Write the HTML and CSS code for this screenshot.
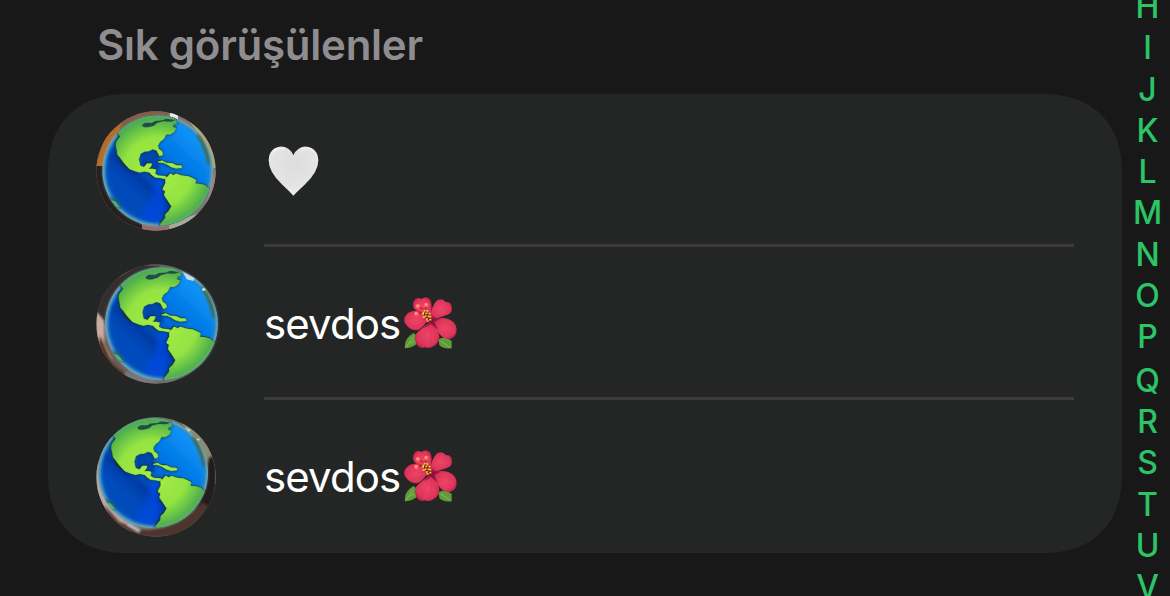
FILE: index.html
```html
<!DOCTYPE html>
<html lang="tr">
  <head>
    <meta charset="UTF-8" />
    <meta name="viewport" content="width=device-width, initial-scale=1.0" />
    <title>Sık görüşülenler</title>
    <link rel="stylesheet" href="styles.css">
  </head>
  <body>
    <!-- Shared shapes -->
    <svg class="defs" width="0" height="0">
      <defs>
        <radialGradient id="ocean" gradientUnits="userSpaceOnUse" cx="215" cy="212" r="166">
          <stop offset="0" stop-color="#0068d8" />
          <stop offset="0.85" stop-color="#0074e0" />
          <stop offset="0.95" stop-color="#2a8ccb" />
          <stop offset="1" stop-color="#6f9fae" />
        </radialGradient>
        <linearGradient id="depth" gradientUnits="userSpaceOnUse" x1="310" y1="110" x2="150" y2="290">
          <stop offset="0" stop-color="#0b94f8" stop-opacity="0.9" />
          <stop offset="0.45" stop-color="#0576e4" stop-opacity="0.5" />
          <stop offset="0.8" stop-color="#0435a0" stop-opacity="0.9" />
          <stop offset="1" stop-color="#043fb0" stop-opacity="0.75" />
        </linearGradient>
        <radialGradient id="land" gradientUnits="userSpaceOnUse" cx="215" cy="215" r="178">
          <stop offset="0" stop-color="#a6ee45" />
          <stop offset="0.58" stop-color="#93e342" />
          <stop offset="0.85" stop-color="#55b54a" />
          <stop offset="1" stop-color="#3f9a62" />
        </radialGradient>
        <filter id="soft" x="-20%" y="-20%" width="140%" height="140%">
          <feGaussianBlur stdDeviation="3" />
        </filter>
        <filter id="softer" x="-20%" y="-20%" width="140%" height="140%">
          <feGaussianBlur stdDeviation="8" />
        </filter>
        <clipPath id="sphere"><circle cx="215" cy="212" r="166" /></clipPath>
        <g id="continents">
          <path d="M92 92L112 76Q150 48 205 46Q245 42 270 60L273 71L262 73L260 82L270 84L265 95L253 103L240 103L233 117L221 126L215 137L218 147L228 154L230 164L221 168L212 151L200 147L188 153L176 154L163 161L158 178L162 197L174 202L183 191L197 191L194 200L187 207L200 207L209 209L207 221L217 227L239 229L236 236L222 233L208 232L198 225L190 217L176 214L161 217L145 212L130 206L119 194L110 184L103 174L95 164L93 151L90 138L91 125L103 109Z" />
          <path d="M216 186L228 182L241 189L258 190L270 196L286 197L288 203L270 205L256 201L243 193L232 188Z" />
          <path d="M238 233L246 230L252 221L263 226L270 221L288 227L306 229L320 235L330 240L327 251L342 252L358 256L372 268Q366 306 330 345Q285 388 222 382L224 371L238 354L239 342L249 333L257 319L246 302L235 286L238 274L230 268L239 249Z" />
        </g>
        <g id="globe">
          <circle cx="215" cy="212" r="166" fill="url(#ocean)" />
          <g clip-path="url(#sphere)">
            <circle cx="215" cy="212" r="155" fill="url(#depth)" filter="url(#soft)" />
            <path d="M240 232Q245 310 220 372L160 355Q205 300 205 240Z" fill="#0048e8" opacity="0.65" filter="url(#softer)" />
            <path d="M165 158L215 145L222 210L165 200Z" fill="#033a9c" opacity="0.75" filter="url(#soft)" />
            <path d="M338 96Q362 130 372 185L366 200Q360 155 332 108Z" fill="#3f6b4b" filter="url(#soft)" />
            <path d="M66 288L92 298L108 322L98 326L74 306Z" fill="#245b68" filter="url(#soft)" />
            <path d="M74 300L88 304L103 323L88 318Z" fill="#34b772" />
            <use href="#continents" transform="translate(-2 1)" fill="#102d3d" stroke="#102d3d" stroke-width="6" opacity="0.6" filter="url(#soft)" />
            <use href="#continents" x="-1" y="-1" fill="#17352c" stroke="#17352c" stroke-width="4" />
            <use href="#continents" fill="url(#land)" stroke="url(#land)" stroke-width="2" />
            <path d="M167 76L177 68L198 68L207 63L229 61L241 56L270 60L254 65L232 64L213 69L204 77L187 82L174 82Z" fill="#204d4b" />
            <path d="M99 171L122 202L115 201L102 186Z" fill="#17352c" />
          </g>
          <circle cx="215" cy="212" r="164" fill="none" stroke="#8daab2" stroke-width="5" opacity="0.5" filter="url(#soft)" />
        </g>
        <symbol id="hibiscus" viewBox="0 0 159 156">
          <radialGradient id="petal" cx="0.5" cy="0.5" r="0.6">
            <stop offset="0" stop-color="#ee4669" />
            <stop offset="0.7" stop-color="#df355a" />
            <stop offset="1" stop-color="#a81b42" />
          </radialGradient>
          <path d="M3 154Q-1 123 29 108Q46 120 37 142Q22 154 3 154Z" fill="#5d9c38" />
          <path d="M6 151L27 120M18 138L31 132" stroke="#9bca67" stroke-width="2" />
          <path d="M104 127Q124 116 143 132L143 154Q120 157 106 145Z" fill="#5d9c38" />
          <path d="M110 132L137 150" stroke="#a5cd65" stroke-width="2" />
          <path d="M71 61Q40 45 30 34Q23 20 33 7Q41 -1 53 6Q65 -4 78 6Q88 23 78 57Z" fill="url(#petal)" />
          <path d="M78 57Q84 25 100 9Q117 3 125 15Q144 15 143 30Q147 47 130 53Q107 62 78 68Z" fill="url(#petal)" />
          <path d="M72 70Q58 34 31 41Q8 44 2 61Q-4 76 10 88Q26 105 45 98Q59 89 72 70Z" fill="url(#petal)" />
          <path d="M88 72Q108 55 135 67Q158 77 158 98Q157 120 140 125Q121 129 107 112Q92 98 88 72Z" fill="url(#petal)" />
          <path d="M77 76Q50 96 36 111Q29 125 38 142Q46 157 62 151Q77 156 90 147Q108 138 106 117Q102 96 77 76Z" fill="url(#petal)" />
          <path d="M65 65Q76 49 91 61L107 66L92 75L103 99L82 82L61 94L72 75Z" fill="#9d123e" opacity="0.75" />
          <g fill="none" stroke="#b42348" opacity="0.45">
            <path d="M70 69L12 65M66 76L22 89M93 58L132 24M98 65L137 39M98 79L143 112M101 76L151 89M75 86L51 144M82 87L78 149M85 85L99 135" />
          </g>
          <path d="M78 66L59 37M65 45L46 48M62 40L68 26M57 36L43 29" stroke="#bb183d" stroke-width="4" />
          <g fill="#ff6861">
            <circle cx="42" cy="28" r="7" />
            <circle cx="67" cy="24" r="7" />
            <circle cx="37" cy="51" r="7" />
          </g>
          <g fill="#ffad91">
            <circle cx="41" cy="26" r="3" />
            <circle cx="66" cy="22" r="3" />
            <circle cx="36" cy="49" r="3" />
          </g>
          <path d="M57 43L78 65" stroke="#6e1d24" stroke-width="13" />
          <path d="M54 51H60M59 41H65M67 42H73M56 60H62M64 49H70M74 50H80M62 57H68M71 58H77M66 66H72M76 68H82M68 72H74M55 46H61M76 59H82" stroke="#ffc936" stroke-width="5" />
        </symbol>
      </defs>
    </svg>

    <main class="contacts">
      <h2 class="title">Sık görüşülenler</h2>
      <ul class="card">
        <li class="row">
          <svg class="avatar" viewBox="30 33 360 360">
            <clipPath id="photo1"><circle cx="210" cy="213" r="179" /></clipPath>
            <g clip-path="url(#photo1)">
              <rect x="30" y="33" width="360" height="360" fill="#82746e" />
              <path d="M30 198V33H245V80H110L65 198Z" fill="#855d48" />
              <path d="M30 198L58 110L108 68L65 198Z" fill="#b76d25" />
              <path d="M30 198H70L110 340L170 375V393H30Z" fill="#24201f" />
              <path d="M252 33H276V60H252Z" fill="#edf0e5" />
              <path d="M310 65L350 90L390 165V205H370L355 125Z" fill="#aaa87b" />
              <path d="M370 205H390V270L350 345L390 205Z" fill="#9c8584" />
              <path d="M168 370H250V393H168Z" fill="#927070" />
              <path d="M250 370L340 340V393H250Z" fill="#a9aa9c" />
              <use href="#globe" />
            </g>
          </svg>
          <div class="name">
            <svg class="heart" viewBox="0 0 153 150" role="img" aria-label="Beyaz kalp">
              <defs>
                <radialGradient id="heartFill" cx="0.5" cy="0.35" r="0.7">
                  <stop offset="0" stop-color="#dddddd" />
                  <stop offset="0.65" stop-color="#e4e4e4" />
                  <stop offset="1" stop-color="#f4f4f4" />
                </radialGradient>
              </defs>
              <path d="M76 149Q68 139 43 116Q2 79 2 43Q2 18 20 7Q41 -4 61 8Q72 16 76 28Q80 16 92 8Q111 -4 132 7Q151 18 151 43Q151 79 110 116Q85 139 76 149Z" fill="url(#heartFill)" />
              <path d="M12 22Q28 2 51 10M96 11Q123 0 139 19" fill="none" stroke="#fafafa" stroke-width="5" opacity="0.55" />
            </svg>
          </div>
        </li>
        <li class="row">
          <svg class="avatar" viewBox="30 30 360 360">
            <clipPath id="photo2"><circle cx="210" cy="210" r="179" /></clipPath>
            <g clip-path="url(#photo2)">
              <rect x="30" y="30" width="360" height="360" fill="#675c58" />
              <path d="M30 170L70 90L155 35H220V65L130 75L80 130L60 220Z" fill="#342e2f" />
              <path d="M30 170L55 200V270L80 320L30 285Z" fill="#c9aca0" filter="url(#soft)" />
              <path d="M42 245L80 330L145 380L90 370L35 290Z" fill="#54311e" filter="url(#soft)" />
              <path d="M120 350L220 385L300 370V390H100Z" fill="#77777c" filter="url(#soft)" />
            </g>
            <use href="#globe" transform="translate(7 -7) scale(1.02)" />
            <path d="M291 55L326 73L322 81L302 76ZM347 105L354 101L360 108L351 112Z" fill="#c6dce9" />
          </svg>
          <div class="name">sevdos<svg class="flower" role="img" aria-label="Çiçek"><use href="#hibiscus" /></svg></div>
        </li>
        <li class="row">
          <svg class="avatar" viewBox="30 30 360 360">
            <clipPath id="photo3"><circle cx="210" cy="210" r="179" /></clipPath>
            <g clip-path="url(#photo3)">
              <rect x="30" y="30" width="360" height="360" fill="#6b6c60" />
              <path d="M270 30L345 75L390 155V240L350 320L370 200L330 100Z" fill="#898b75" />
              <path d="M370 150H390V270L340 350L330 310Z" fill="#211a1b" filter="url(#soft)" />
              <path d="M30 150L55 230L95 320L155 370L110 375L30 290Z" fill="#b9aaa5" filter="url(#soft)" />
              <path d="M55 295L100 345L180 375L160 390L80 360Z" fill="#5a3426" filter="url(#soft)" />
              <path d="M160 370Q260 375 350 285L370 300L300 390H160Z" fill="#4d352e" filter="url(#soft)" />
              <path d="M130 348L165 368L158 378L120 354Z" fill="#b5bec5" filter="url(#soft)" />
              <use href="#globe" transform="translate(-13 -13) scale(0.995)" />
              <path d="M296 61L315 68L309 75ZM330 97L341 94L340 102Z" fill="#c4d3bd" />
            </g>
          </svg>
          <div class="name">sevdos<svg class="flower" role="img" aria-label="Çiçek"><use href="#hibiscus" /></svg></div>
        </li>
      </ul>
    </main>

    <!-- Alphabet index -->
    <nav class="index">
      <span>H</span>
      <span>I</span>
      <span>J</span>
      <span>K</span>
      <span>L</span>
      <span>M</span>
      <span>N</span>
      <span>O</span>
      <span>P</span>
      <span class="lower">Q</span>
      <span>R</span>
      <span>S</span>
      <span>T</span>
      <span>U</span>
      <span>V</span>
    </nav>
  </body>
</html>
```
FILE: styles.css
```css
* {
  box-sizing: border-box;
}
body {
  margin: 0;
  height: 596px;
  overflow: hidden;
  background-color: #181818;
  color: #fff;
  font-family: Inter, "Liberation Sans", sans-serif;
  display: flex;
}
.defs {
  position: absolute;
}
.contacts {
  width: 1122px;
  flex-shrink: 0;
  padding-left: 48px;
}
.title {
  margin: 0;
  height: 94px;
  padding: 19px 0 0 49px;
  font-size: 42px;
  line-height: 51px;
  font-weight: 600;
  letter-spacing: -0.25px;
  color: #8f8d8f;
}
.card {
  list-style: none;
  margin: 0;
  padding: 0 48px;
  height: 459px;
  background-color: #242625;
  border-radius: 80px;
  corner-shape: superellipse(1.2);
}
.row {
  display: flex;
  align-items: center;
  gap: 48px;
  height: 153px;
}
.avatar {
  width: 120px;
  height: 120px;
  flex-shrink: 0;
  overflow: visible;
}
.name {
  flex: 1;
  height: 153px;
  display: flex;
  align-items: center;
  padding-top: 2px;
  font-size: 42px;
  letter-spacing: -0.9px;
  border-bottom: 3px solid #3b393b;
}
.row:last-child .name {
  border-bottom-color: transparent;
}
.heart {
  width: 51px;
  height: 50px;
  margin: 2px 0 0 4px;
}
.flower {
  width: 53px;
  height: 52px;
  margin-left: 4px;
}
.index {
  width: 48px;
  padding-left: 3px;
  margin-top: -14px;
  display: flex;
  flex-direction: column;
  align-items: center;
  font-size: 32px;
  font-weight: 500;
  line-height: 41.3px;
  color: #2bc467;
}
.index span {
  height: 41.3px;
  flex-shrink: 0;
}
.index .lower {
  margin-top: 2px;
}
```
